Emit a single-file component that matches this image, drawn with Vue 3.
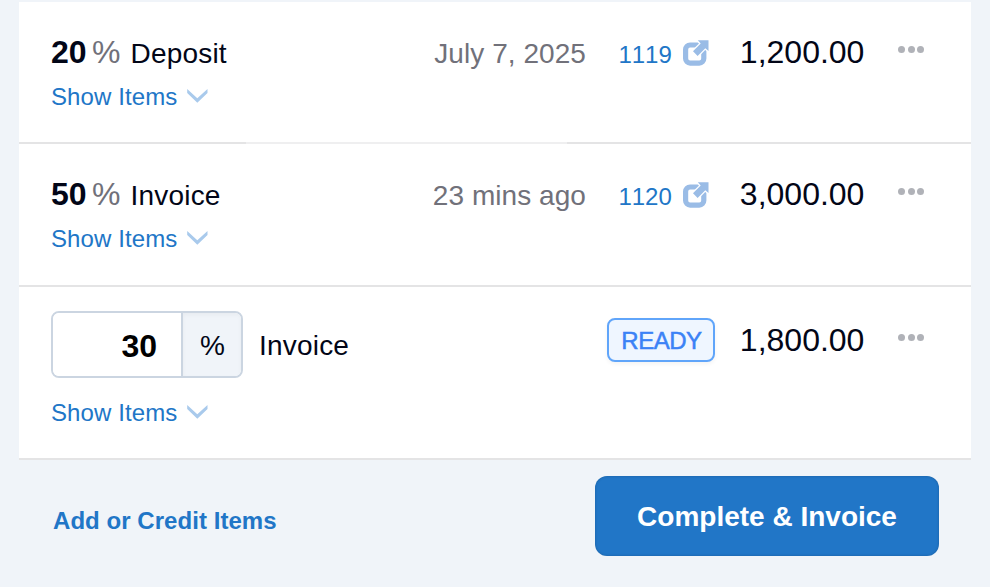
<template>
  <div class="panel">
    <div class="list">
      <div
        v-for="item in invoices"
        :key="item.id"
        class="row"
        :class="{ editing: item.ready, highlight: item.id === 1 }"
      >
        <div class="main">
          <div class="line">
            <template v-if="item.ready">
              <div class="percent-input">
                <input v-model="item.percent" type="text" />
                <span class="unit">%</span>
              </div>
            </template>
            <template v-else>
              <span class="percent">{{ item.percent }}</span>
              <span class="sign">%</span>
            </template>
            <span class="label">{{ item.label }}</span>
          </div>
          <a class="show">
            <span>Show Items</span>
            <svg class="chevron" width="21" height="14" viewBox="0 0 21 14">
              <path d="M.2 0 10.300 9.300 20.500 0V3.900L10.300 13.700.2 3.900Z" fill="#a9caec" />
            </svg>
          </a>
        </div>
        <div class="side">
          <span v-if="item.date" class="date">{{ item.date }}</span>
          <a v-if="item.number" class="number">
            <span>{{ item.number }}</span>
            <svg class="external" width="26" height="26" viewBox="0 0 26 26">
              <rect
                x="2.600"
                y="5"
                width="18.200"
                height="18.100"
                rx="4.500"
                fill="none"
                stroke="#9abce6"
                stroke-width="5.200"
              />
              <path
                d="M14.800 .3H25.500V11L22.300 8.200 14.600 15.900 10 11.300 17.700 3.600Z"
                fill="#9abce6"
                stroke="#fff"
                stroke-width="2.600"
                paint-order="stroke"
              />
            </svg>
          </a>
          <span v-if="item.ready" class="badge">READY</span>
          <span class="amount">{{ item.amount }}</span>
          <button class="more" aria-label="More">
            <i></i><i></i><i></i>
          </button>
        </div>
      </div>
    </div>
    <div class="footer">
      <a class="add">Add or Credit Items</a>
      <button class="complete">Complete &amp; Invoice</button>
    </div>
  </div>
</template>

<script setup>
import { ref } from 'vue'

const invoices = ref([
  { id: 1, percent: '20', label: 'Deposit', date: 'July 7, 2025', number: '1119', amount: '1,200.00' },
  { id: 2, percent: '50', label: 'Invoice', date: '23 mins ago', number: '1120', amount: '3,000.00' },
  { id: 3, percent: '30', label: 'Invoice', amount: '1,800.00', ready: true },
])
</script>

<style>
body {
  background: #f0f4f9;
}
</style>

<style scoped>
.panel {
  box-sizing: border-box;
  width: 990px;
  height: 587px;
  padding: 2px 19px 0;
  overflow: hidden;
  font-family: "Liberation Sans", Arial, sans-serif;
  color: #020617;
}
.row {
  box-sizing: border-box;
  display: flex;
  justify-content: space-between;
  height: 143px;
  padding: 32px 47px 0 32px;
  border-bottom: 2px solid #e4e4e5;
  background: #fff;
}
.row.highlight {
  height: 142px;
  border-image: linear-gradient(to right, #e4e4e5 228px, #efeff0 228px, #efeff0 548px, #e4e4e5 548px) 2;
}
.row.editing {
  height: 173px;
  padding-top: 24px;
}
.line {
  display: flex;
  align-items: baseline;
  height: 36px;
  line-height: 36px;
}
.percent {
  width: 41px;
  font-size: 32px;
  font-weight: 700;
}
.sign {
  width: 38.500px;
  font-size: 32px;
  color: #71717a;
}
.label {
  font-size: 28px;
  letter-spacing: 0.2px;
}
.show {
  display: flex;
  align-items: center;
  gap: 10px;
  height: 28px;
  margin-top: 13px;
  font-size: 24px;
  line-height: 28px;
  letter-spacing: 0.1px;
  color: #2176c7;
}
.chevron {
  margin-bottom: 2px;
}
.editing .line {
  align-items: center;
  gap: 16px;
  height: 67px;
}
.editing .label {
  padding-top: 2px;
}
.editing .show {
  margin-top: 21px;
}
.percent-input {
  box-sizing: border-box;
  display: flex;
  width: 192px;
  height: 67px;
  border: 2px solid #cbd5e1;
  border-radius: 8px;
  overflow: hidden;
}
.percent-input input {
  box-sizing: border-box;
  width: 128px;
  padding: 4px 24px 0 0;
  border: none;
  font: 700 32px "Liberation Sans", Arial, sans-serif;
  color: #000;
  text-align: right;
  outline: none;
}
.unit {
  flex: 1;
  padding-left: 1px;
  border-left: 2px solid #cbd5e1;
  background: #f0f4f9;
  box-shadow: inset 0 2px 4px rgba(0, 0, 0, 0.04);
  font-size: 28px;
  line-height: 65px;
  text-align: center;
}
.side {
  display: flex;
  align-items: baseline;
  height: 36px;
  line-height: 36px;
}
.editing .side {
  margin-top: 11px;
}
.date {
  margin-right: 32.500px;
  font-size: 28px;
  letter-spacing: 0.05px;
  color: #71717a;
}
.number {
  display: flex;
  justify-content: space-between;
  width: 91px;
  font-size: 24px;
  font-kerning: none;
  color: #2176c7;
}
.external {
  margin-top: 3px;
}
.amount {
  width: 155px;
  font-size: 32px;
  text-align: right;
}
.editing .amount {
  width: 149px;
}
.more {
  display: flex;
  align-self: flex-start;
  gap: 2.300px;
  margin: 12px 0 0 34px;
  padding: 0;
  border: none;
  background: none;
}
.more i {
  width: 7px;
  height: 7px;
  border-radius: 50%;
  background: #b0b2b8;
}
.badge {
  box-sizing: border-box;
  align-self: flex-start;
  width: 108px;
  height: 44px;
  margin-top: -4px;
  border: 2px solid #60a5fa;
  border-radius: 8px;
  background: #eff6ff;
  box-shadow: 0 2px 4px rgba(0, 0, 0, 0.05);
  font-size: 24px;
  line-height: 41px;
  letter-spacing: -0.5px;
  text-align: center;
  color: #3b82f6;
  -webkit-text-stroke: 0.5px #3b82f6;
}
.footer {
  display: flex;
  justify-content: space-between;
  align-items: center;
  padding: 16px 32px 0 34px;
}
.add {
  padding-top: 9px;
  font-size: 24px;
  font-weight: 700;
  letter-spacing: 0.05px;
  color: #2176c7;
}
.complete {
  width: 344px;
  height: 80px;
  padding: 2px 0 0;
  border: none;
  border-radius: 12px;
  background: #2176c7;
  box-shadow: inset 0 0 3px rgba(0, 0, 0, 0.2);
  font: 700 28px "Liberation Sans", Arial, sans-serif;
  color: #fff;
}
</style>
